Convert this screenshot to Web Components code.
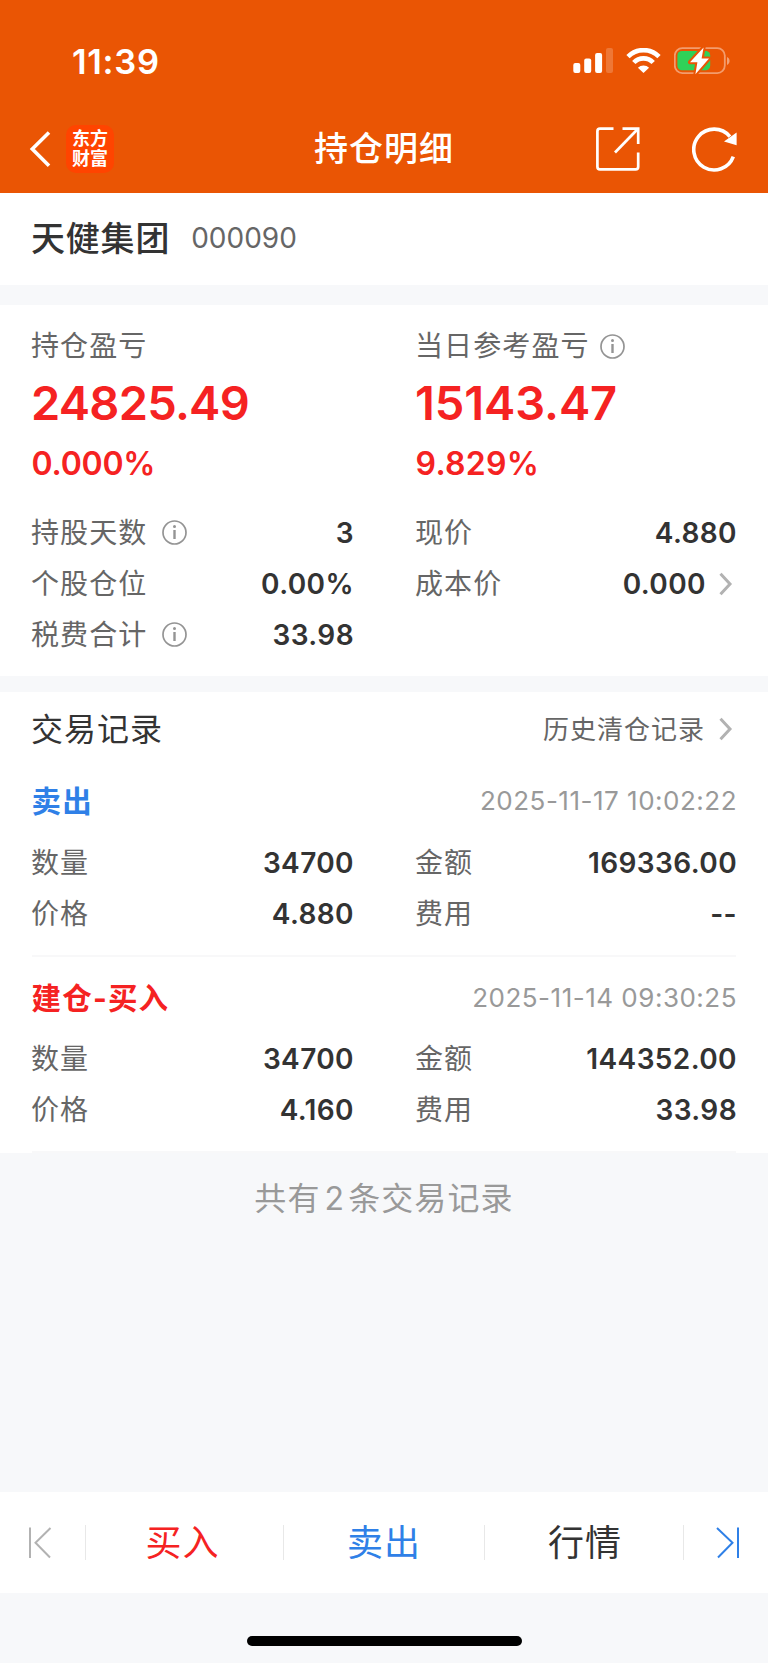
<!DOCTYPE html>
<html lang="zh-CN">
<head>
<meta charset="utf-8">
<meta name="viewport" content="width=device-width, initial-scale=1">
<title>持仓明细</title>
<style>
  body {
    margin: 0;
    background: #f7f8fa;
    font-family: Inter, "Noto Sans CJK SC", sans-serif;
    color: #333;
  }
</style>
</head>
<body>
<position-page></position-page>

<script>
class BaseElement extends HTMLElement {
  constructor() {
    super();
    this.attachShadow({ mode: "open" });
  }

  connectedCallback() {
    this.shadowRoot.innerHTML = `
      <style>
        * { box-sizing: border-box; }
        svg { display: block; flex: none; }
        ${this.styles()}
      </style>
      ${this.markup()}
    `;
  }

  attr(name) {
    return this.getAttribute(name) ?? "";
  }

  styles() {
    return "";
  }

  markup() {
    return "<slot></slot>";
  }
}

class StatusBar extends BaseElement {
  styles() {
    return `
      :host {
        display: flex;
        align-items: center;
        height: 122px;
        padding: 0 37px 0 72px;
        color: #fff;
      }
      .time {
        flex: 1;
        font-size: 34.5px;
        font-weight: 600;
        letter-spacing: 0.7px;
      }
      .signal { margin-right: 12px; }
      .wifi { margin-right: 13px; }
    `;
  }

  markup() {
    return `
      <span class="time">11:39</span>
      <svg class="signal" width="41" height="26" viewBox="0 0 41 26" fill="#fff">
        <rect x="0.3" y="15" width="7" height="10" rx="2"/>
        <rect x="11.2" y="10.5" width="7" height="14.5" rx="2"/>
        <rect x="22.1" y="5" width="7" height="20" rx="2"/>
        <rect x="33" y="0" width="7" height="25" rx="2" opacity="0.2"/>
      </svg>
      <svg class="wifi" width="35" height="26" viewBox="0 0 35 26">
        <g fill="none" stroke="#fff" stroke-width="4.6">
          <path d="M2 8.6 A21.7 21.7 0 0 1 33 8.6"/>
          <path d="M7.8 14.5 A13.4 13.4 0 0 1 27.2 14.5"/>
        </g>
        <path d="M17.5 25 L11.9 19.8 A8 8 0 0 1 23.1 19.8 Z" fill="#fff"/>
      </svg>
      <svg class="battery" width="57" height="30" viewBox="0 0 57 30">
        <rect x="0.8" y="2.1" width="50" height="25" rx="7.5" fill="none" stroke="#fff" stroke-opacity="0.42" stroke-width="1.8"/>
        <path d="M53 11 C56.4 12.2 56.4 17.6 53 18.9 Z" fill="#fff" opacity="0.45"/>
        <rect x="3.4" y="5" width="32.8" height="19.2" rx="4.5" fill="#30d158"/>
        <path d="M29.6 1.4 L16 16.2 H23.4 L21.4 28.2 L35 12.6 H27.6 Z" fill="#fff" stroke="#ea5504" stroke-width="4" stroke-linejoin="round" paint-order="stroke"/>
      </svg>
    `;
  }
}

class NavBar extends BaseElement {
  styles() {
    return `
      :host {
        display: grid;
        grid-template-columns: 1fr auto 1fr;
        align-items: center;
        height: 52px;
        padding: 0 30px 0 29px;
        color: #fff;
      }
      .left, .right { display: flex; align-items: center; }
      .right { justify-content: flex-end; gap: 52px; }
      .title {
        margin-left: 1px;
        padding-top: 1px;
        font-size: 34px;
        font-weight: 500;
        letter-spacing: 1px;
        line-height: 52px;
        white-space: nowrap;
      }
      .logo {
        width: 48px;
        height: 48px;
        margin-left: 15px;
        padding-top: 4px;
        border-radius: 10px;
        background: #ff4400;
        font-size: 18px;
        font-weight: 700;
        line-height: 20px;
        text-align: center;
      }
    `;
  }

  markup() {
    return `
      <div class="left">
        <svg width="22" height="38" viewBox="0 0 22 38" fill="none" stroke="#fff" stroke-width="3.6">
          <path d="M20 2.5 L3.3 19 L20 35.8"/>
        </svg>
        <div class="logo">东方<br>财富</div>
      </div>
      <div class="title"><slot></slot></div>
      <div class="right">
        <svg width="44" height="44" viewBox="0 0 44 44" fill="none" stroke="#fff" stroke-width="2.7">
          <path d="M17.5 1.6 H4 Q1.4 1.6 1.4 4.2 V39.8 Q1.4 42.4 4 42.4 H39.6 Q42.2 42.4 42.2 39.8 V25.5"/>
          <path d="M26.5 1.6 H42.2 V17"/>
          <path d="M42 1.8 L19 25.5"/>
        </svg>
        <svg width="46" height="46" viewBox="0 0 46 46">
          <path d="M41.3 30.6 A20.4 20.4 0 1 1 37.9 10.6" fill="none" stroke="#fff" stroke-width="3.6"/>
          <path d="M44.6 6.5 V19.2 L32 15.5 Z" fill="#fff"/>
        </svg>
      </div>
    `;
  }
}

class StockTitle extends BaseElement {
  styles() {
    return `
      :host {
        display: flex;
        align-items: center;
        height: 92px;
        padding: 0 31px;
        background: #fff;
      }
      .name {
        font-size: 34px;
        font-weight: 500;
        letter-spacing: 0.8px;
        line-height: 90px;
      }
      .code {
        margin-left: 21px;
        padding-bottom: 1px;
        font-size: 28px;
        color: #666;
      }
    `;
  }

  markup() {
    return `
      <span class="name">${this.attr("name")}</span>
      <span class="code">${this.attr("code")}</span>
    `;
  }
}

class InfoIcon extends BaseElement {
  styles() {
    return `:host { display: block; }`;
  }

  markup() {
    return `
      <svg width="25" height="25" viewBox="0 0 25 25">
        <circle cx="12.5" cy="12.5" r="11.5" fill="none" stroke="#949494" stroke-width="1.7"/>
        <circle cx="12.5" cy="6.4" r="1.5" fill="#949494"/>
        <path d="M12.5 10 V19" stroke="#949494" stroke-width="2.4"/>
      </svg>
    `;
  }
}

class ChevronIcon extends BaseElement {
  styles() {
    return `:host { display: block; }`;
  }

  markup() {
    return `
      <svg width="14" height="24" viewBox="0 0 14 24" fill="none" stroke="#b2b2b2" stroke-width="3">
        <path d="M1.5 1.8 L11 12 L1.5 22.2"/>
      </svg>
    `;
  }
}

class ProfitCell extends BaseElement {
  styles() {
    return `
      :host { display: block; color: #f52222; }
      .label {
        display: flex;
        align-items: center;
        height: 46px;
        font-size: 28px;
        letter-spacing: 1.1px;
        line-height: 44px;
        color: #666;
      }
      .text {
        margin-left: -1px;
        padding-top: 1px;
      }
      info-icon {
        margin-left: 10px;
        padding-top: 1px;
      }
      .amount {
        height: 68px;
        margin-left: -1px;
        font-size: 47px;
        font-weight: 600;
        letter-spacing: var(--amount-spacing, 0);
        line-height: 68px;
      }
      .percent {
        height: 52px;
        margin-left: -0.5px;
        font-size: 32px;
        font-weight: 600;
        letter-spacing: var(--percent-spacing, 0);
        line-height: 54px;
      }
    `;
  }

  markup() {
    return `
      <div class="label">
        <span class="text">${this.attr("label")}</span>
        ${this.hasAttribute("info") ? "<info-icon></info-icon>" : ""}
      </div>
      <div class="amount">${this.attr("amount")}</div>
      <div class="percent">${this.attr("percent")}</div>
    `;
  }
}

class DataRow extends BaseElement {
  styles() {
    return `
      :host {
        display: flex;
        align-items: center;
        height: 51.2px;
      }
      .label {
        margin-left: -1px;
        font-size: 28px;
        letter-spacing: 1.1px;
        line-height: 51px;
        color: #666;
      }
      info-icon {
        margin-left: 14.5px;
        padding-bottom: 1.5px;
      }
      .value {
        flex: 1;
        margin-right: -1px;
        font-size: 28px;
        font-weight: 600;
        letter-spacing: 0.4px;
        line-height: 51px;
        text-align: right;
      }
      chevron-icon { margin: 0 3px 0 14px; }
    `;
  }

  markup() {
    return `
      <span class="label">${this.attr("label")}</span>
      ${this.hasAttribute("info") ? "<info-icon></info-icon>" : ""}
      <span class="value">${this.attr("value")}</span>
      ${this.hasAttribute("link") ? "<chevron-icon></chevron-icon>" : ""}
    `;
  }
}

class TwoColumns extends BaseElement {
  styles() {
    return `
      :host {
        display: grid;
        grid-template-columns: 321px 320px;
        column-gap: 63px;
      }
    `;
  }
}

class ProfitPanel extends BaseElement {
  styles() {
    return `
      :host {
        display: block;
        height: 371px;
        margin: 20px 0 16px;
        padding: 18px 32px 0;
        background: #fff;
      }
      .held {
        --amount-spacing: -0.75px;
        --percent-spacing: -0.2px;
      }
      .today {
        --amount-spacing: -0.1px;
        --percent-spacing: 0.3px;
      }
      .details { margin-top: 19px; }
    `;
  }

  markup() {
    return `
      <two-columns>
        <profit-cell class="held" label="持仓盈亏" amount="24825.49" percent="0.000%"></profit-cell>
        <profit-cell class="today" label="当日参考盈亏" amount="15143.47" percent="9.829%" info></profit-cell>
      </two-columns>
      <two-columns class="details">
        <data-row label="持股天数" value="3" info></data-row>
        <data-row label="现价" value="4.880"></data-row>
        <data-row label="个股仓位" value="0.00%"></data-row>
        <data-row label="成本价" value="0.000" link></data-row>
        <data-row label="税费合计" value="33.98" info></data-row>
      </two-columns>
    `;
  }
}

class TradeRecord extends BaseElement {
  styles() {
    return `
      :host {
        display: block;
        height: 196.5px;
        border-bottom: 2px solid #f8f8f9;
      }
      .head {
        display: flex;
        align-items: center;
        justify-content: space-between;
        height: 77.5px;
        padding-top: 4px;
      }
      .type {
        margin-left: -0.5px;
        padding-bottom: 3px;
        font-size: 29.5px;
        font-weight: 700;
        letter-spacing: 1.2px;
        color: #2f80e7;
      }
      :host([buy]) .type { color: #f52222; }
      .time {
        margin-right: -1px;
        font-size: 26px;
        letter-spacing: 0.5px;
        color: #999;
      }
    `;
  }

  markup() {
    return `
      <div class="head">
        <span class="type">${this.attr("type")}</span>
        <span class="time">${this.attr("time")}</span>
      </div>
      <two-columns><slot></slot></two-columns>
    `;
  }
}

class TradeList extends BaseElement {
  styles() {
    return `
      :host {
        display: block;
        padding: 0 32px;
        background: #fff;
      }
      .title {
        display: flex;
        align-items: center;
        height: 68.5px;
        padding-top: 5.5px;
      }
      .name {
        flex: 1;
        margin-left: -1px;
        padding-bottom: 3px;
        font-size: 32px;
        letter-spacing: 1px;
      }
      .history {
        padding-bottom: 2px;
        font-size: 26px;
        letter-spacing: 1px;
        color: #666;
      }
      chevron-icon { margin: 0 3px 0 14px; }
    `;
  }

  markup() {
    return `
      <div class="title">
        <span class="name">交易记录</span>
        <span class="history">历史清仓记录</span>
        <chevron-icon></chevron-icon>
      </div>
      <trade-record type="卖出" time="2025-11-17 10:02:22">
        <data-row label="数量" value="34700"></data-row>
        <data-row label="金额" value="169336.00"></data-row>
        <data-row label="价格" value="4.880"></data-row>
        <data-row label="费用" value="--"></data-row>
      </trade-record>
      <trade-record type="建仓-买入" time="2025-11-14 09:30:25" buy>
        <data-row label="数量" value="34700"></data-row>
        <data-row label="金额" value="144352.00"></data-row>
        <data-row label="价格" value="4.160"></data-row>
        <data-row label="费用" value="33.98"></data-row>
      </trade-record>
    `;
  }
}

class TradeToolbar extends BaseElement {
  styles() {
    return `
      :host {
        display: grid;
        grid-template-columns: 86px 198px 201px 199px 84px;
        align-items: center;
        height: 101px;
        background: #fff;
      }
      .item {
        height: 35px;
        border-right: 1px solid #e8e8e8;
        font-size: 36px;
        letter-spacing: 1px;
        line-height: 37px;
        text-align: center;
      }
      .first { padding: 1.5px 0 0 28px; }
      .last { padding: 1.5px 0 0 32px; border: 0; }
      .buy { color: #f52222; padding-right: 4px; }
      .sell { color: #2f80e7; }
      .quote { padding-left: 2px; }
    `;
  }

  markup() {
    return `
      <div class="item first">
        <svg width="25" height="32" viewBox="0 0 25 32" fill="none" stroke="#b2b2b2" stroke-width="2">
          <path d="M2 0.5 V31 M22.5 1 L7.5 15.8 L22 30.5"/>
        </svg>
      </div>
      <div class="item buy">买入</div>
      <div class="item sell">卖出</div>
      <div class="item quote">行情</div>
      <div class="item last">
        <svg width="25" height="32" viewBox="0 0 25 32" fill="none" stroke="#2f80e7" stroke-width="2">
          <path d="M22 0.5 V31 M1 1 L16.5 15.8 L2 30.5"/>
        </svg>
      </div>
    `;
  }
}

class PositionPage extends BaseElement {
  styles() {
    return `
      :host {
        display: flex;
        flex-direction: column;
        width: 768px;
        height: 1663px;
      }
      header {
        height: 192.5px;
        background: #ea5504;
      }
      .summary {
        flex: 1;
        padding-top: 22px;
        font-size: 32px;
        letter-spacing: 1.1px;
        line-height: 48px;
        text-align: center;
        color: #999;
      }
      .count { margin: 0 3px 0 4px; }
      .home {
        height: 70px;
        padding-top: 43px;
      }
      .home div {
        width: 275px;
        height: 10px;
        margin: 0 auto;
        border-radius: 5px;
        background: #000;
      }
    `;
  }

  markup() {
    return `
      <header>
        <status-bar></status-bar>
        <nav-bar>持仓明细</nav-bar>
      </header>
      <stock-title name="天健集团" code="000090"></stock-title>
      <profit-panel></profit-panel>
      <trade-list></trade-list>
      <div class="summary">共有<span class="count">2</span>条交易记录</div>
      <trade-toolbar></trade-toolbar>
      <div class="home"><div></div></div>
    `;
  }
}

customElements.define("status-bar", StatusBar);
customElements.define("nav-bar", NavBar);
customElements.define("stock-title", StockTitle);
customElements.define("info-icon", InfoIcon);
customElements.define("chevron-icon", ChevronIcon);
customElements.define("profit-cell", ProfitCell);
customElements.define("data-row", DataRow);
customElements.define("two-columns", TwoColumns);
customElements.define("profit-panel", ProfitPanel);
customElements.define("trade-record", TradeRecord);
customElements.define("trade-list", TradeList);
customElements.define("trade-toolbar", TradeToolbar);
customElements.define("position-page", PositionPage);
</script>
</body>
</html>
